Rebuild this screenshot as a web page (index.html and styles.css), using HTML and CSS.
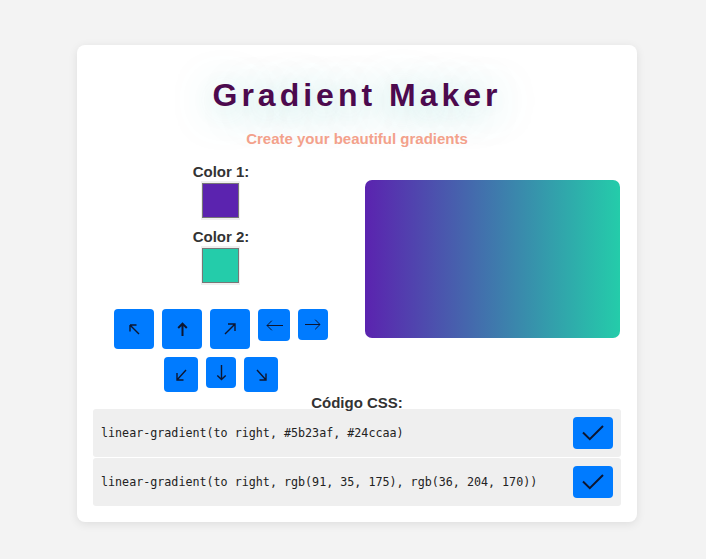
FILE: index.html
```html
<!DOCTYPE html>
<html lang="es">
<head>
<meta charset="utf-8">
<title>Gradient Maker</title>
<link rel="stylesheet" href="styles.css">
</head>
<body>
<main class="card">
  <h1 class="title">Gradient Maker</h1>
  <p class="subtitle">Create your beautiful gradients</p>
  <section class="workspace">
    <div class="controls">
      <label class="color-group">
        <span class="color-label">Color 1:</span>
        <input class="color-input" type="color" value="#5b23af">
      </label>
      <label class="color-group second">
        <span class="color-label">Color 2:</span>
        <input class="color-input" type="color" value="#24ccaa">
      </label>
      <div class="arrows">
        <button class="arrow b40" title="to top left"><svg width="11" height="11" viewBox="0 0 11 11"><path d="M10 10 L1.2 1.2 M1 1 H7.5 M1 1 V7.5"/></svg></button>
        <button class="arrow b40" title="to top"><svg class="bold" width="11" height="14" viewBox="0 0 11 14"><path d="M5.5 14 V1.8 M1.2 6 L5.5 1.6 L9.8 6"/></svg></button>
        <button class="arrow b40" title="to top right"><svg width="12" height="12" viewBox="0 0 12 12"><path d="M1 11 L10.8 1.2 M4 1 H11 V8"/></svg></button>
        <button class="arrow b32" title="to left"><svg class="thin" width="17" height="11" viewBox="0 0 17 11"><path d="M17 5.5 H1 M5.8 0.7 L1 5.5 L5.8 10.3"/></svg></button>
        <button class="arrow b30" title="to right"><svg class="thin" width="16" height="11" viewBox="0 0 16 11"><path d="M0 5.5 H15 M10.2 0.7 L15 5.5 L10.2 10.3"/></svg></button>
        <button class="arrow b34" title="to bottom left"><svg width="11" height="12" viewBox="0 0 11 12"><path d="M10 1 L1.2 10.8 M1 4 V11 H7.5"/></svg></button>
        <button class="arrow b30" title="to bottom"><svg width="11" height="16" viewBox="0 0 11 16"><path d="M5.5 0 V14.5 M1.3 10.5 L5.5 14.6 L9.7 10.5"/></svg></button>
        <button class="arrow b34" title="to bottom right"><svg width="11" height="12" viewBox="0 0 11 12"><path d="M1 1 L9.8 10.8 M3.5 11 H10 V4.5"/></svg></button>
      </div>
    </div>
    <div class="preview-col">
      <div class="preview"></div>
    </div>
  </section>
  <h2 class="code-title">Código CSS:</h2>
  <div class="code-row">
    <code class="code-text">linear-gradient(to right, #5b23af, #24ccaa)</code>
    <button class="copy" title="Copiar"><svg width="22" height="16" viewBox="0 0 22 16"><path d="M1 7.5 L7.8 14.2 L21 1"/></svg></button>
  </div>
  <div class="code-row">
    <code class="code-text">linear-gradient(to right, rgb(91, 35, 175), rgb(36, 204, 170))</code>
    <button class="copy" title="Copiar"><svg width="22" height="16" viewBox="0 0 22 16"><path d="M1 7.5 L7.8 14.2 L21 1"/></svg></button>
  </div>
</main>
</body>
</html>
```
FILE: styles.css
```css
* { box-sizing: border-box; }

html, body {
  margin: 0;
  background: #f3f3f3;
}

body {
  padding: 45px 0 30px 8px;
  font-family: "Liberation Sans", Arial, sans-serif;
}

.card {
  width: 560px;
  margin: 0 auto;
  background: #fff;
  border-radius: 8px;
  box-shadow: 0 2px 10px rgba(0, 0, 0, 0.09);
  padding: 16px 16px 15px;
}

.title {
  margin: 16px 0 0;
  font-size: 32px;
  font-weight: bold;
  line-height: normal;
  letter-spacing: 4px;
  text-align: center;
  color: #4c0a4e;
  text-shadow: 0 5px 36px rgba(60, 185, 175, 0.55);
}

.subtitle {
  margin: 16px 0 0;
  font-size: 15px;
  font-weight: bold;
  line-height: normal;
  text-align: center;
  color: #f3a18b;
}

.workspace {
  margin-top: 16px;
  display: grid;
  grid-template-columns: 1fr 1fr;
  column-gap: 16px;
  align-items: start;
}

.controls {
  display: flex;
  flex-direction: column;
  align-items: center;
}

.color-group {
  display: flex;
  flex-direction: column;
  align-items: center;
  gap: 1px;
}

.color-group.second {
  margin-top: 8px;
}

.color-label {
  font-size: 15px;
  font-weight: bold;
  line-height: normal;
  color: #333;
}

.color-input {
  -webkit-appearance: none;
  appearance: none;
  width: 39px;
  height: 39px;
  padding: 0;
  margin: 0;
  border: none;
  background: #efefef;
  cursor: pointer;
}

.color-input::-webkit-color-swatch-wrapper {
  padding: 2px 1px;
}

.color-input::-webkit-color-swatch {
  border: 1px solid #777;
  border-radius: 0;
}

.arrows {
  margin-top: 20px;
  width: 100%;
  display: flex;
  flex-wrap: wrap;
  justify-content: center;
  align-items: flex-start;
}

.arrow {
  margin: 4px;
  padding: 0;
  border: none;
  border-radius: 4px;
  background: #007bff;
  display: flex;
  align-items: center;
  justify-content: center;
  cursor: pointer;
}

.arrow svg, .copy svg {
  display: block;
  fill: none;
  stroke: #0d1630;
  stroke-width: 1.4;
  stroke-linecap: butt;
  stroke-linejoin: miter;
}

.arrow svg.bold { stroke-width: 2; }
.arrow svg.thin { stroke-width: 1; }

.b40 { width: 40px; height: 40px; }
.b32 { width: 32px; height: 32px; }
.b30 { width: 30px; height: 31px; }
.b34 { width: 34px; height: 35px; }

.preview-col {
  padding-top: 17px;
}

.preview {
  width: 255px;
  height: 158px;
  border-radius: 7px;
  background: linear-gradient(to right, #5b23af, #24ccaa);
}

.code-title {
  margin: 0;
  font-size: 15px;
  font-weight: bold;
  line-height: 13px;
  text-align: center;
  color: #333;
}

.code-row {
  display: flex;
  align-items: center;
  justify-content: space-between;
  padding: 8px;
  background: #efefef;
  border-radius: 3px;
  margin-bottom: 1px;
}

.code-text {
  font-family: "DejaVu Sans Mono", "Liberation Mono", monospace;
  font-size: 11.7px;
  color: #222;
}

.copy {
  width: 40px;
  height: 32px;
  padding: 0;
  border: none;
  border-radius: 4px;
  background: #007bff;
  display: flex;
  align-items: center;
  justify-content: center;
  cursor: pointer;
}

.copy svg { stroke-width: 2; }
```
